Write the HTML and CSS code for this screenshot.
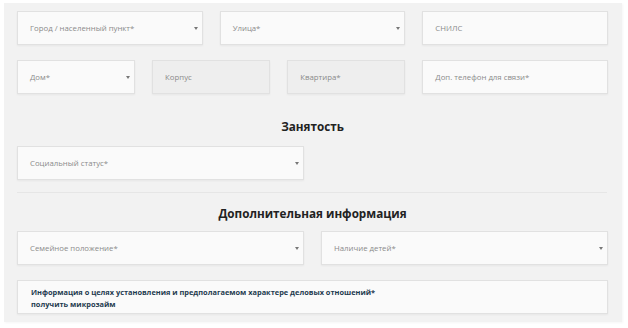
FILE: index.html
```html
<!DOCTYPE html>
<html lang="ru">
  <head>
    <meta charset="UTF-8" />
    <meta name="viewport" content="width=device-width, initial-scale=1.0" />
    <title>Анкета</title>
    <link rel="stylesheet" href="styles.css">
  </head>
  <body>
    <div class="form">
      <div class="row three">
        <div class="field select">Город / населенный пункт*</div>
        <div class="field select">Улица*</div>
        <div class="field">СНИЛС</div>
      </div>
      <div class="row three">
        <div class="sub">
          <div class="field select">Дом*</div>
          <div class="field disabled">Корпус</div>
          <div class="field disabled">Квартира*</div>
        </div>
        <div class="field">Доп. телефон для связи*</div>
      </div>

      <h2 class="title">Занятость</h2>
      <div class="row two">
        <div class="field select">Социальный статус*</div>
      </div>

      <div class="divider"></div>

      <h2 class="title">Дополнительная информация</h2>
      <div class="row two">
        <div class="field select">Семейное положение*</div>
        <div class="field select">Наличие детей*</div>
      </div>
      <div class="info">
        Информация о целях установления и предполагаемом характере деловых отношений*<br>
        получить микрозайм
      </div>
    </div>
  </body>
</html>
```

FILE: styles.css
```css
* {
  margin: 0;
  padding: 0;
  box-sizing: border-box;
}

body {
  background: #ffffff;
  font-family: "Open Sans", "Noto Sans", sans-serif;
}

.form {
  margin: 3px 6px 6px 4px;
  background: #f2f2f2;
  padding: 8px 14px 8px 13px;
  box-shadow: 1px 1px 2px rgba(0, 0, 0, 0.04);
}

.row {
  display: grid;
  gap: 17px;
}

.row + .row {
  margin-top: 15px;
}

.three {
  grid-template-columns: repeat(3, 1fr);
}

.two {
  grid-template-columns: repeat(2, 1fr);
}

.sub {
  grid-column: span 2;
  display: grid;
  grid-template-columns: repeat(3, 1fr);
  gap: 17px;
}

.field {
  height: 34px;
  background: #fafafa;
  border: 1px solid #e1e1e1;
  box-shadow: 0 1px 2px rgba(0, 0, 0, 0.05);
  display: flex;
  align-items: center;
  padding: 0 12px;
  font-size: 7.8px;
  color: #8a8a8a;
  position: relative;
}

.field.disabled {
  background: #eeeeee;
}

.select::after {
  content: "";
  position: absolute;
  right: 4px;
  top: 15px;
  border-left: 2px solid transparent;
  border-right: 2px solid transparent;
  border-top: 3px solid #777;
}

.title {
  text-align: center;
  font-size: 11.7px;
  font-weight: 700;
  color: #222;
  margin: 24px 0 12px;
  line-height: 16px;
}

.divider {
  height: 1px;
  background: #e6e6e6;
  margin-top: 12px;
  margin-right: 1px;
}

.divider + .title {
  margin: 12px 0 10px;
}

.info {
  margin-top: 15px;
  height: 34px;
  background: #fafafa;
  border: 1px solid #e1e1e1;
  box-shadow: 0 1px 2px rgba(0, 0, 0, 0.05);
  padding: 5px 13px;
  font-size: 7.4px;
  line-height: 12px;
  font-weight: 700;
  color: #1e3a4f;
}
```
